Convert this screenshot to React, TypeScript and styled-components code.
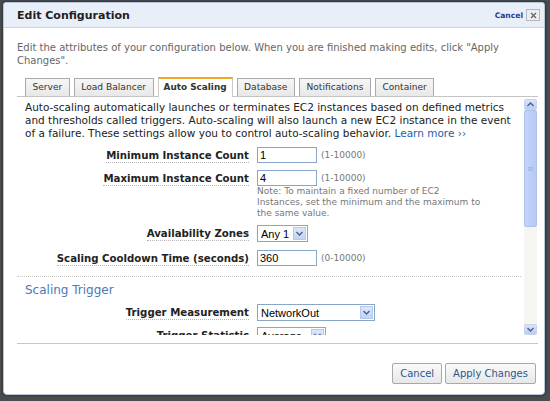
import React from "react"
import styled, { createGlobalStyle } from "styled-components"

const GlobalStyle = createGlobalStyle`
  html, body {
    margin: 0;
    padding: 0;
  }
  body {
    width: 550px;
    height: 401px;
    overflow: hidden;
    background: #4a4c4e;
    font-family: "DejaVu Sans", Verdana, sans-serif;
    color: #222;
  }
`

const Page = styled.div`
  padding: 2px 5px 0 3px;
`

const Dialog = styled.div`
  width: 540px;
  height: 391px;
  background: #fff;
  border: 1px solid #b7c8dd;
  border-radius: 3px 3px 4px 4px;
  box-shadow: 0 0 3px rgba(0, 0, 0, 0.6);
  display: flex;
  flex-direction: column;
  overflow: hidden;
`

const Header = styled.div`
  height: 24px;
  background: #e9eff9;
  border-bottom: 1px solid #c9d6e8;
  display: flex;
  align-items: center;
  padding: 0 4px 0 13px;
  h1 {
    flex: 1;
    margin: 0;
    font-size: 11px;
    font-weight: bold;
    color: #1e1e1e;
  }
`

const CancelLink = styled.a`
  font-size: 7.6px;
  font-weight: bold;
  color: #1f3f93;
  margin-right: 3px;
  cursor: pointer;
`

const CloseBox = styled.span`
  width: 12px;
  height: 10px;
  border: 1px solid #b8b8b8;
  background: #eceef0;
  display: flex;
  align-items: center;
  justify-content: center;
`

const Intro = styled.p`
  margin: 0;
  padding: 13px 13px 0;
  font-size: 10px;
  line-height: 13px;
  color: #666;
`

const Tabs = styled.div`
  display: flex;
  gap: 4px;
  margin: 10px 0 0 13px;
  padding-left: 8px;
  height: 19px;
  align-items: flex-end;
`

const Tab = styled.div<{ active?: boolean }>`
  padding: 0 ${p => (p.active ? "5px" : "6.5px")};
  font-size: ${p => (p.active ? "8.9px" : "9.1px")};
  line-height: 17px;
  font-weight: ${p => (p.active ? "bold" : "normal")};
  color: #333;
  background: ${p => (p.active ? "#fff" : "linear-gradient(#f6f6f6, #e8e8e8)")};
  border: 1px solid ${p => (p.active ? "#c9c9c9" : "#aaa")};
  border-top: ${p => (p.active ? "2px solid #f5a623" : "1px solid #aaa")};
  border-bottom: none;
  margin-bottom: ${p => (p.active ? "-1px" : "0")};
  position: relative;
  z-index: 1;
  height: ${p => (p.active ? "18px" : "17px")};
`

const Panel = styled.div`
  margin: 0 6px 0 13px;
  border-top: 1px solid #c4c4c4;
  border-bottom: 1px solid #c6c6c6;
  padding-bottom: 8px;
  display: flex;
`

const Viewport = styled.div`
  flex: 1;
  height: 238px;
  overflow: hidden;
`

const Content = styled.div`
  padding: 4px 3px 0 8px;
`

const Description = styled.p`
  margin: 0;
  font-size: 10.5px;
  line-height: 13px;
  color: #222;
  a {
    color: #1d5fa8;
    text-decoration: none;
  }
`

const Row = styled.div<{ gap: number }>`
  display: grid;
  grid-template-columns: 224px 1fr;
  column-gap: 8px;
  align-items: center;
  margin-top: ${p => p.gap}px;
`

const Label = styled.label`
  text-align: right;
  font-size: 10.2px;
  font-weight: bold;
  color: #222;
  span {
    border-bottom: 1px dotted #b4b4b4;
    padding-bottom: 1px;
  }
`

const Field = styled.div`
  display: flex;
  align-items: center;
  gap: 4px;
`

const TextInput = styled.div`
  width: 56px;
  height: 14px;
  border: 1px solid #8aa6c7;
  font-family: "Liberation Sans", Arial, sans-serif;
  font-size: 11px;
  line-height: 14px;
  padding-left: 2px;
  color: #000;
`

const Range = styled.span`
  font-size: 9px;
  color: #777;
`

const Note = styled.div`
  margin-left: 232px;
  width: 229px;
  font-size: 9px;
  line-height: 11px;
  color: #777;
`

const Select = styled.div<{ w: number }>`
  width: ${p => p.w}px;
  height: 15px;
  border: 1px solid #8aa6c7;
  display: flex;
  align-items: center;
  font-family: "Liberation Sans", Arial, sans-serif;
  font-size: 11px;
  color: #000;
  padding-left: 3px;
  span {
    flex: 1;
    overflow: hidden;
    white-space: nowrap;
  }
`

const SelectButton = styled.div`
  width: 13px;
  height: 13px;
  margin-right: 1px;
  background: linear-gradient(#dde7fa, #c3d3f3);
  border: 1px solid #b7c8ea;
  box-sizing: border-box;
  display: flex;
  align-items: center;
  justify-content: center;
`

const Separator = styled.div`
  margin: 10px 0 0 -8px;
  border-top: 1px dotted #c8c8c8;
`

const SectionTitle = styled.h2`
  margin: 5px 0 0;
  font-size: 12px;
  line-height: 16px;
  font-weight: normal;
  color: #4d79b3;
`

const Scrollbar = styled.div`
  width: 13px;
  height: 236px;
  margin: 2px 1px 0 0;
  background: #f5f5f2;
  display: flex;
  flex-direction: column;
`

const ScrollButton = styled.div`
  height: 11px;
  background: linear-gradient(#d8e3fb, #bccdf2);
  border: 1px solid #c6d4f1;
  border-radius: 2px;
  box-sizing: border-box;
  display: flex;
  align-items: center;
  justify-content: center;
`

const Thumb = styled.div`
  height: 117px;
  background: linear-gradient(90deg, #c4d3f8, #b7c9f4);
  border: 1px solid #aec1ec;
  border-radius: 2px;
  box-sizing: border-box;
  display: flex;
  align-items: center;
  justify-content: center;
`

const Track = styled.div`
  flex: 1;
`

const Footer = styled.div`
  display: flex;
  justify-content: flex-end;
  gap: 3px;
  padding: 19px 8px 0 0;
`

const Button = styled.button`
  height: 21px;
  padding: 0 7px;
  font-family: "DejaVu Sans", Verdana, sans-serif;
  font-size: 10px;
  color: #2c5690;
  background: linear-gradient(#fafafa, #e7e7e7);
  border: 1px solid #a9a9a9;
  border-radius: 2px;
`

function Chevron({ up }: { up?: boolean }) {
  return (
    <svg width="7" height="5" viewBox="0 0 7 5">
      <path
        d={up ? "M0.5 4 L3.5 1 L6.5 4" : "M0.5 1 L3.5 4 L6.5 1"}
        fill="none"
        stroke="#4d6185"
        strokeWidth="1.4"
      />
    </svg>
  )
}

function Dropdown({ value, width }: { value: string; width: number }) {
  return (
    <Select w={width}>
      <span>{value}</span>
      <SelectButton>
        <Chevron />
      </SelectButton>
    </Select>
  )
}

function FormRow(props: { label: string; gap: number; children: React.ReactNode }) {
  return (
    <Row gap={props.gap}>
      <Label>
        <span>{props.label}</span>
      </Label>
      <Field>{props.children}</Field>
    </Row>
  )
}

const tabs = ["Server", "Load Balancer", "Auto Scaling", "Database", "Notifications", "Container"]

export default function App() {
  return (
    <Page>
      <GlobalStyle />
      <Dialog>
        <Header>
          <h1>Edit Configuration</h1>
          <CancelLink>Cancel</CancelLink>
          <CloseBox>
            <svg width="7" height="7" viewBox="0 0 7 7">
              <path d="M1 1 L6 6 M6 1 L1 6" stroke="#666" strokeWidth="1.3" />
            </svg>
          </CloseBox>
        </Header>
        <Intro>
          Edit the attributes of your configuration below. When you are finished making edits, click "Apply
          Changes".
        </Intro>
        <Tabs>
          {tabs.map(t => (
            <Tab key={t} active={t === "Auto Scaling"}>
              {t}
            </Tab>
          ))}
        </Tabs>
        <Panel>
          <Viewport>
            <Content>
              <Description>
                Auto-scaling automatically launches or terminates EC2 instances based on defined metrics and
                thresholds called triggers. Auto-scaling will also launch a new EC2 instance in the event of a
                failure. These settings allow you to control auto-scaling behavior. <a>Learn more ››</a>
              </Description>
              <FormRow label="Minimum Instance Count" gap={7}>
                <TextInput>1</TextInput>
                <Range>(1-10000)</Range>
              </FormRow>
              <FormRow label="Maximum Instance Count" gap={7}>
                <TextInput>4</TextInput>
                <Range>(1-10000)</Range>
              </FormRow>
              <Note>
                Note: To maintain a fixed number of EC2 Instances, set the minimum and the maximum to the same
                value.
              </Note>
              <FormRow label="Availability Zones" gap={6}>
                <Dropdown value="Any 1" width={46} />
              </FormRow>
              <FormRow label="Scaling Cooldown Time (seconds)" gap={8}>
                <TextInput>360</TextInput>
                <Range>(0-10000)</Range>
              </FormRow>
              <Separator />
              <SectionTitle>Scaling Trigger</SectionTitle>
              <FormRow label="Trigger Measurement" gap={6}>
                <Dropdown value="NetworkOut" width={113} />
              </FormRow>
              <FormRow label="Trigger Statistic" gap={6}>
                <Dropdown value="Average" width={64} />
              </FormRow>
            </Content>
          </Viewport>
          <Scrollbar>
            <ScrollButton>
              <Chevron up />
            </ScrollButton>
            <Thumb>
              <svg width="5" height="4" viewBox="0 0 5 4">
                <path d="M0 0.5 H5 M0 2 H5 M0 3.5 H5" stroke="#9cb2e0" strokeWidth="0.8" />
              </svg>
            </Thumb>
            <Track />
            <ScrollButton>
              <Chevron />
            </ScrollButton>
          </Scrollbar>
        </Panel>
        <Footer>
          <Button>Cancel</Button>
          <Button>Apply Changes</Button>
        </Footer>
      </Dialog>
    </Page>
  )
}
